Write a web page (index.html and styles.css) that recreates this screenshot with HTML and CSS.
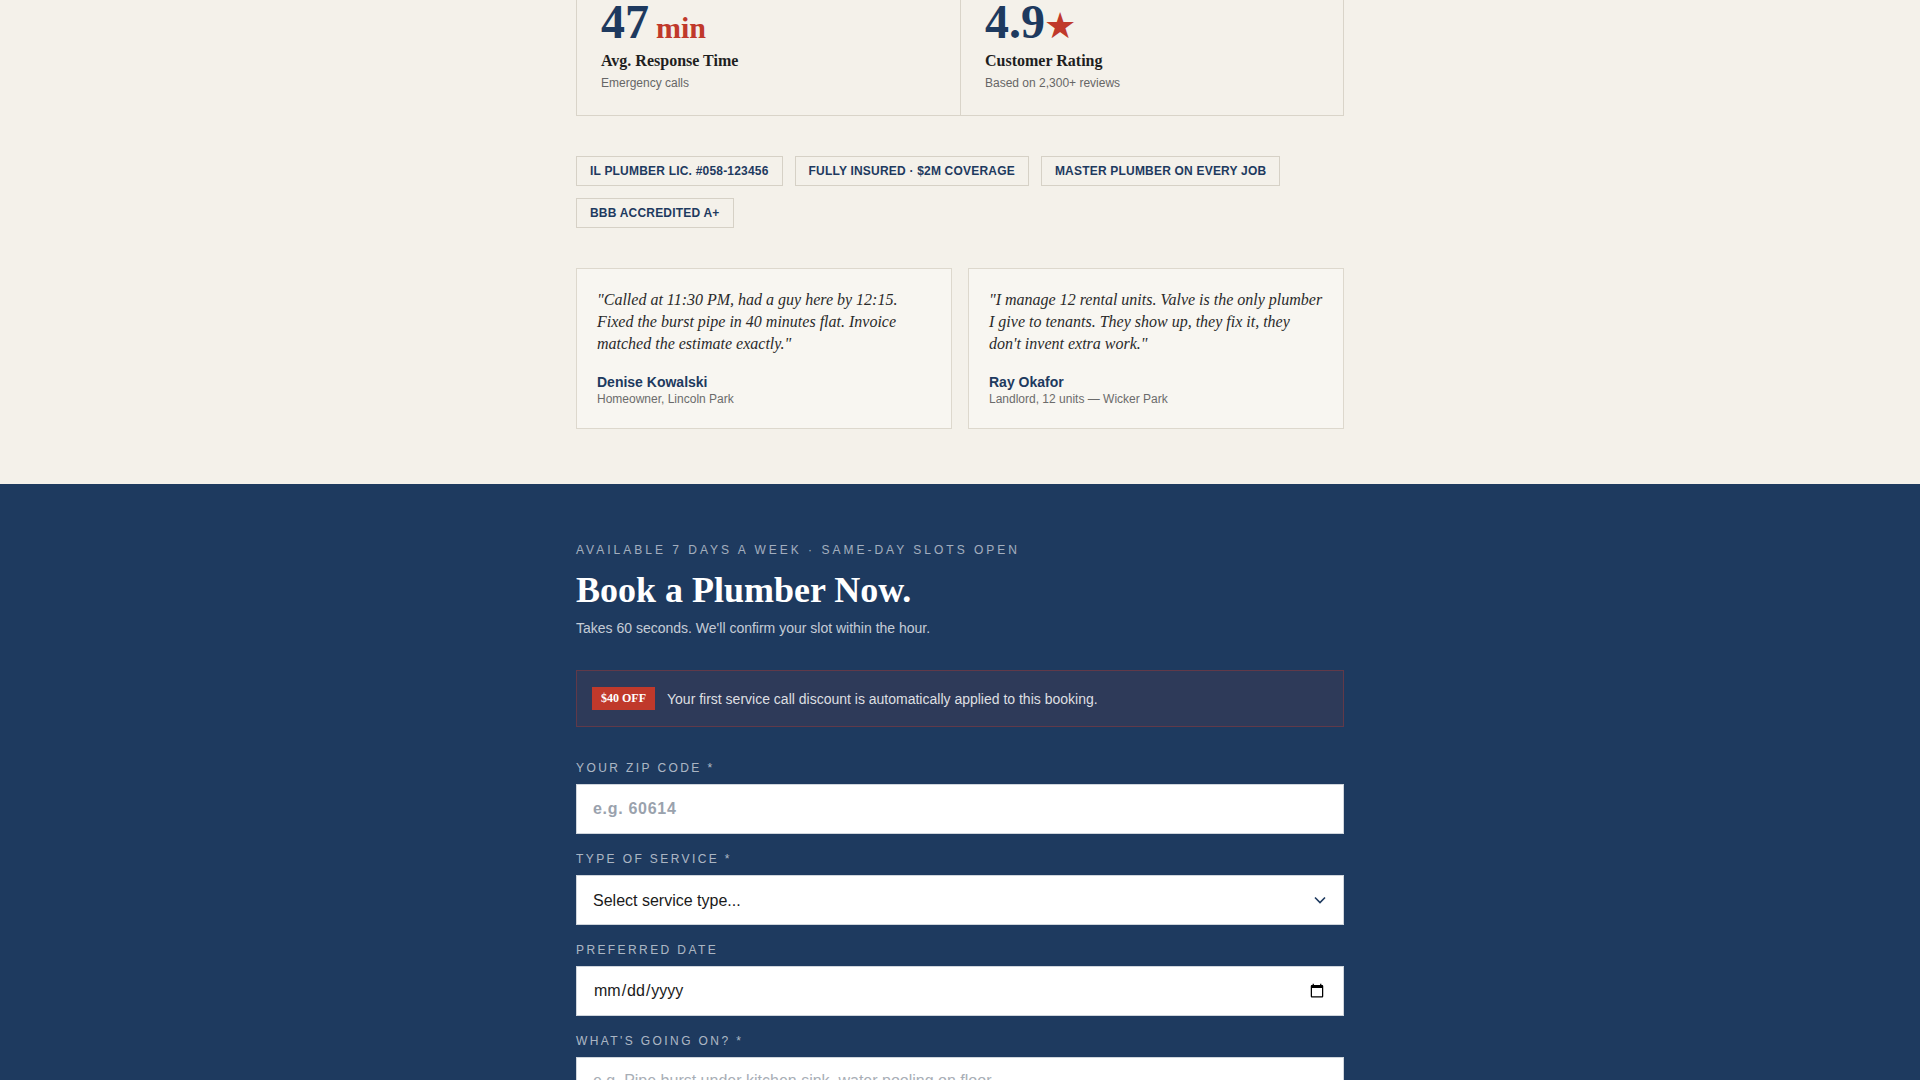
FILE: index.html
```html
<!DOCTYPE html>
<html lang="en">
<head>
    <meta charset="UTF-8">
    <meta name="viewport" content="width=device-width, initial-scale=1.0">
    <title>Valve Plumbing — Book a Plumber</title>
    <link rel="stylesheet" href="styles.css">
</head>
<body>
    <!-- Trust / proof section -->
    <section class="proof">
        <div class="container">
            <div class="stats">
                <div class="stat">
                    <div class="stat-value">47<span class="stat-unit">min</span></div>
                    <div class="stat-label">Avg. Response Time</div>
                    <div class="stat-note">Emergency calls</div>
                </div>
                <div class="stat">
                    <div class="stat-value">4.9<span class="stat-star">★</span></div>
                    <div class="stat-label">Customer Rating</div>
                    <div class="stat-note">Based on 2,300+ reviews</div>
                </div>
            </div>

            <ul class="badges">
                <li class="badge">IL Plumber Lic. #058-123456</li>
                <li class="badge">Fully Insured · $2M Coverage</li>
                <li class="badge">Master Plumber on Every Job</li>
                <li class="badge">BBB Accredited A+</li>
            </ul>

            <div class="reviews">
                <figure class="review">
                    <blockquote class="review-quote">"Called at 11:30 PM, had a guy here by 12:15. Fixed the burst pipe in 40 minutes flat. Invoice matched the estimate exactly."</blockquote>
                    <figcaption>
                        <div class="review-name">Denise Kowalski</div>
                        <div class="review-role">Homeowner, Lincoln Park</div>
                    </figcaption>
                </figure>
                <figure class="review">
                    <blockquote class="review-quote">"I manage 12 rental units. Valve is the only plumber I give to tenants. They show up, they fix it, they don't invent extra work."</blockquote>
                    <figcaption>
                        <div class="review-name">Ray Okafor</div>
                        <div class="review-role">Landlord, 12 units — Wicker Park</div>
                    </figcaption>
                </figure>
            </div>
        </div>
    </section>

    <!-- Booking form -->
    <section class="booking" id="book">
        <div class="container">
            <p class="eyebrow">Available 7 days a week · Same-day slots open</p>
            <h2 class="booking-title">Book a Plumber Now.</h2>
            <p class="booking-lead">Takes 60 seconds. We'll confirm your slot within the hour.</p>

            <div class="promo">
                <span class="promo-tag">$40 OFF</span>
                <span>Your first service call discount is automatically applied to this booking.</span>
            </div>

            <form class="booking-form">
                <div class="field">
                    <label for="zip">Your ZIP code *</label>
                    <input class="input input-zip" type="text" id="zip" placeholder="e.g. 60614">
                </div>
                <div class="field">
                    <label for="service">Type of service *</label>
                    <div class="select-wrap">
                        <select class="input" id="service">
                            <option>Select service type...</option>
                            <option>Emergency repair</option>
                            <option>Drain cleaning</option>
                            <option>Water heater</option>
                            <option>Leak detection</option>
                        </select>
                        <svg class="select-arrow" width="12" height="8" viewBox="0 0 12 8">
                            <path d="M1 1.5 L6 6.5 L11 1.5" fill="none" stroke="#1e3a5f" stroke-width="1.6"/>
                        </svg>
                    </div>
                </div>
                <div class="field">
                    <label for="date">Preferred date</label>
                    <input class="input" type="date" id="date">
                </div>
                <div class="field">
                    <label for="issue">What's going on? *</label>
                    <textarea class="input input-area" id="issue" rows="4" placeholder="e.g. Pipe burst under kitchen sink, water pooling on floor..."></textarea>
                </div>
            </form>
        </div>
    </section>
</body>
</html>
```

FILE: styles.css
```css
body {
    margin: 0;
    background-color: #f4f1ea;
    color: #1a1a1a;
    font-family: "Liberation Sans", Arial, sans-serif;
}

.container {
    width: 768px;
    margin: 0 auto;
}

/* Proof section */
.proof {
    padding-bottom: 55px;
}

.stats {
    display: grid;
    grid-template-columns: 1fr 1fr;
    border: 1px solid #d9d4c9;
    margin-top: -29px; /* page is scrolled past the top of the card */
    margin-bottom: 40px;
}

.stat {
    padding: 28px 24px 24px;
}

.stat + .stat {
    border-left: 1px solid #d9d4c9;
}

.stat-value {
    font-family: "Liberation Serif", "Times New Roman", serif;
    font-weight: bold;
    font-size: 48px;
    line-height: 44px;
    color: #1e3a5f;
}

.stat-unit {
    font-size: 30px;
    line-height: 1;
    color: #c0392b;
    margin-left: 7px;
}

.stat-star {
    font-family: "DejaVu Sans", sans-serif;
    font-size: 36px;
    line-height: 1;
    color: #c0392b;
    margin-left: -1px;
}

.stat-label {
    font-family: "Liberation Serif", "Times New Roman", serif;
    font-weight: bold;
    font-size: 16px;
    line-height: 20px;
    margin-top: 7px;
    color: #1f1f1f;
}

.stat-note {
    font-size: 12px;
    line-height: 16px;
    margin-top: 4px;
    color: #666;
}

/* Credentials */
.badges {
    display: flex;
    flex-wrap: wrap;
    gap: 12px;
    list-style: none;
    padding: 0;
    margin: 0 0 40px;
}

.badge {
    border: 1px solid #d6d1c6;
    padding: 7px 13px;
    font-size: 12px;
    line-height: 14px;
    font-weight: bold;
    text-transform: uppercase;
    letter-spacing: 0.2px;
    color: #1e3a5f;
}

/* Reviews */
.reviews {
    display: grid;
    grid-template-columns: 1fr 1fr;
    gap: 16px;
}

.review {
    margin: 0;
    padding: 20px 19px 21px 20px;
    border: 1px solid #ddd8cd;
    background-color: rgba(255, 255, 255, 0.35);
}

.review-quote {
    margin: 0 0 18px;
    font-family: "Liberation Serif", "Times New Roman", serif;
    font-style: italic;
    font-size: 16px;
    line-height: 22px;
    color: #2a2a2a;
}

.review-name {
    font-size: 14px;
    line-height: 18px;
    font-weight: bold;
    color: #1e3a5f;
}

.review-role {
    font-size: 12px;
    line-height: 16px;
    color: #6b6b6b;
}

/* Booking section */
.booking {
    background-color: #1e3a5f;
    color: #fff;
    padding: 58px 0 60px;
}

.eyebrow {
    margin: 0 0 12px;
    font-size: 12px;
    line-height: 16px;
    letter-spacing: 3px;
    text-transform: uppercase;
    color: rgba(255, 255, 255, 0.6);
}

.booking-title {
    margin: 0 0 8px;
    font-family: "Liberation Serif", "Times New Roman", serif;
    font-size: 36px;
    line-height: 40px;
    font-weight: bold;
}

.booking-lead {
    margin: 0 0 32px;
    font-size: 14px;
    line-height: 20px;
    color: rgba(255, 255, 255, 0.75);
}

.promo {
    display: flex;
    align-items: center;
    gap: 12px;
    padding: 16px 15px;
    border: 1px solid rgba(192, 57, 43, 0.35);
    background-color: rgba(192, 57, 43, 0.1);
    font-size: 14px;
    line-height: 20px;
    color: rgba(255, 255, 255, 0.85);
    margin-bottom: 34px;
}

.promo-tag {
    background-color: #c0392b;
    color: #fff;
    font-family: "Liberation Serif", "Times New Roman", serif;
    font-weight: bold;
    font-size: 12px;
    line-height: 15px;
    padding: 4px 9px;
}

/* Form fields */
.field {
    margin-bottom: 18px;
}

.field label {
    display: block;
    margin-bottom: 9px;
    font-size: 12px;
    line-height: 14px;
    letter-spacing: 2.4px;
    text-transform: uppercase;
    color: rgba(255, 255, 255, 0.65);
}

.input {
    display: block;
    box-sizing: border-box;
    width: 100%;
    height: 50px;
    padding: 0 16px;
    border: 1px solid #cfd5dc;
    border-radius: 0;
    background-color: #fff;
    font-family: "Liberation Sans", Arial, sans-serif;
    font-size: 16px;
    color: #1a1a1a;
}

.input::placeholder {
    color: #9aa2ad;
}

.input-zip {
    font-weight: bold;
    letter-spacing: 0.7px;
}

.input-area {
    height: auto;
    padding: 14px 16px;
    resize: vertical;
}

.input-area::placeholder {
    color: #a8aeb6;
}

.select-wrap {
    position: relative;
}

.select-wrap select {
    appearance: none;
}

.select-arrow {
    position: absolute;
    right: 18px;
    top: 21px;
    pointer-events: none;
}
```
